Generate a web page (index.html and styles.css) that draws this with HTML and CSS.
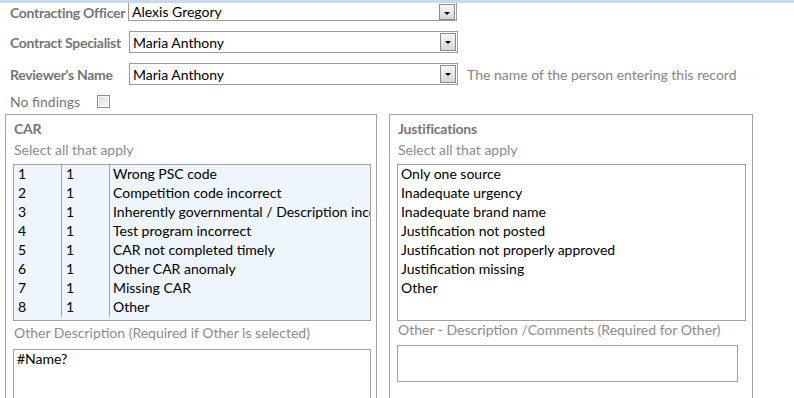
FILE: index.html
```html
<!DOCTYPE html>
<html lang="en">
<head>
    <meta charset="UTF-8">
    <title>Review</title>
    <link rel="stylesheet" href="styles.css">
</head>
<body>
<div class="topbar"></div>
<form class="form">
    <div class="form__line form__line_first">
        <label class="form__label">Contracting Officer</label>
        <div class="combo combo_first">
            <span class="combo__value">Alexis Gregory</span>
            <span class="combo__btn"></span>
        </div>
    </div>
    <div class="form__line">
        <label class="form__label">Contract Specialist</label>
        <div class="combo">
            <span class="combo__value">Maria Anthony</span>
            <span class="combo__btn"></span>
        </div>
    </div>
    <div class="form__line">
        <label class="form__label">Reviewer's Name</label>
        <div class="combo">
            <span class="combo__value">Maria Anthony</span>
            <span class="combo__btn"></span>
        </div>
        <span class="form__hint">The name of the person entering this record</span>
    </div>
    <div class="form__line form__line_check">
        <label class="form__label form__label_plain">No findings</label>
        <span class="check"></span>
    </div>
</form>

<div class="groups">
    <section class="group group_car">
        <h2 class="group__title">CAR</h2>
        <div class="group__sub">Select all that apply</div>
        <div class="list list_car">
            <div class="list__row"><span class="list__cell list__cell_id">1</span><span class="list__cell list__cell_n">1</span><span class="list__cell list__cell_text">Wrong PSC code</span></div>
            <div class="list__row"><span class="list__cell list__cell_id">2</span><span class="list__cell list__cell_n">1</span><span class="list__cell list__cell_text">Competition code incorrect</span></div>
            <div class="list__row"><span class="list__cell list__cell_id">3</span><span class="list__cell list__cell_n">1</span><span class="list__cell list__cell_text">Inherently governmental / Description incorrect</span></div>
            <div class="list__row"><span class="list__cell list__cell_id">4</span><span class="list__cell list__cell_n">1</span><span class="list__cell list__cell_text">Test program incorrect</span></div>
            <div class="list__row"><span class="list__cell list__cell_id">5</span><span class="list__cell list__cell_n">1</span><span class="list__cell list__cell_text">CAR not completed timely</span></div>
            <div class="list__row"><span class="list__cell list__cell_id">6</span><span class="list__cell list__cell_n">1</span><span class="list__cell list__cell_text">Other CAR anomaly</span></div>
            <div class="list__row"><span class="list__cell list__cell_id">7</span><span class="list__cell list__cell_n">1</span><span class="list__cell list__cell_text">Missing CAR</span></div>
            <div class="list__row"><span class="list__cell list__cell_id">8</span><span class="list__cell list__cell_n">1</span><span class="list__cell list__cell_text">Other</span></div>
        </div>
        <div class="group__caption group__caption_car">Other Description (Required if Other is selected)</div>
        <div class="textbox textbox_car">#Name?</div>
    </section>

    <section class="group group_just">
        <h2 class="group__title">Justifications</h2>
        <div class="group__sub">Select all that apply</div>
        <div class="list list_just">
            <div class="list__item">Only one source</div>
            <div class="list__item">Inadequate urgency</div>
            <div class="list__item">Inadequate brand name</div>
            <div class="list__item">Justification not posted</div>
            <div class="list__item">Justification not properly approved</div>
            <div class="list__item">Justification missing</div>
            <div class="list__item">Other</div>
        </div>
        <div class="group__caption group__caption_just">Other - Description /Comments (Required for Other)</div>
        <div class="textbox textbox_just"></div>
    </section>
</div>
</body>
</html>
```

FILE: styles.css
```css
* {
    box-sizing: border-box;
}
html,
body {
    height: 398px;
    overflow: hidden;
}
body {
    margin: 0;
    background: #fff;
    color: #000;
    font: 14px Lato, 'Open Sans', sans-serif;
}
.topbar {
    height: 3px;
    background-color: #c6d9f1;
}
.form {
    padding-left: 10px;
}
.form__line {
    display: flex;
    align-items: center;
    height: 22px;
    margin-top: 10px;
}
.form__line_first {
    height: 18px;
    margin-top: 0;
}
.form__line_check {
    height: 14px;
    margin-top: 9px;
}
.form__label {
    width: 119px;
    color: #767676;
    font-weight: bold;
    letter-spacing: -0.3px;
    white-space: nowrap;
}
.form__label_plain {
    width: 87px;
    font-weight: normal;
    letter-spacing: 0;
}
.form__line_first .form__label {
    width: 118px;
}
.form__hint {
    margin-left: 9px;
    color: #858585;
}
.combo {
    position: relative;
    display: flex;
    align-items: center;
    width: 329px;
    height: 22px;
    padding: 0 1px 0 3px;
    border: 1px solid #9c9c9c;
}
.combo_first {
    height: 18px;
    border-top: 0;
}
.combo__value {
    flex: 1;
}
.combo__btn {
    position: relative;
    width: 16px;
    height: 18px;
    border: 1px solid #8a8a8a;
    background: linear-gradient(#f7f7f7, #d6d6d6);
}
.combo_first .combo__btn {
    height: 16px;
}
.combo__btn::after {
    content: '';
    position: absolute;
    left: 4px;
    top: 7px;
    border-left: 3px solid transparent;
    border-right: 3px solid transparent;
    border-top: 3px solid #000;
}
.check {
    width: 13px;
    height: 13px;
    border: 1px solid #8e8e8e;
    background: linear-gradient(135deg, #dcdcdc, #f8f8f8);
    box-shadow: inset 0 0 0 1px #fff;
}
.groups {
    display: flex;
    gap: 12px;
    margin: 6px 0 0 5px;
}
.group {
    height: 300px;
    padding: 4px 0 0 7px;
    border: 1px solid #a3a3a3;
}
.group_car {
    width: 372px;
    padding-right: 5px;
}
.group_just {
    width: 364px;
    padding-right: 6px;
}
.group__title {
    margin: 0 0 0 1px;
    color: #767676;
    font-size: 14px;
    font-weight: bold;
    letter-spacing: -0.2px;
    line-height: 20px;
}
.group__sub {
    margin-left: 1px;
    color: #8c8c8c;
    line-height: 21px;
}
.list {
    height: 157px;
    margin-top: 4px;
    border: 1px solid #a3a3a3;
    overflow: hidden;
}
.list_car {
    background-color: #eef5fd;
}
.list__row {
    display: flex;
    height: 19px;
    line-height: 18px;
}
.list__cell {
    padding-left: 4px;
    white-space: nowrap;
    overflow: hidden;
}
.list__cell_id {
    width: 48px;
    border-right: 1px solid #a3a3a3;
}
.list__cell_n {
    width: 48px;
    border-right: 1px solid #a3a3a3;
}
.list__cell_text {
    flex: 1;
    padding-left: 3px;
}
.list__item {
    height: 19px;
    padding-left: 3px;
    line-height: 18px;
}
.group__caption {
    margin-left: 1px;
    color: #8c8c8c;
}
.group__caption_car {
    margin-top: 2px;
    line-height: 20px;
}
.group__caption_just {
    margin-top: 1px;
    line-height: 16px;
}
.textbox {
    padding: 0 3px;
    border: 1px solid #a3a3a3;
    line-height: 18px;
}
.textbox_car {
    height: 60px;
    margin-top: 6px;
}
.textbox_just {
    width: 341px;
    height: 37px;
    margin-top: 7px;
}
```
